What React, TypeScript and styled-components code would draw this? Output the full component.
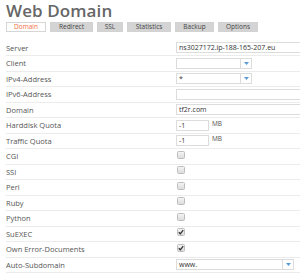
import React from "react";
import styled, { createGlobalStyle } from "styled-components";

const GlobalStyle = createGlobalStyle`
  html, body {
    margin: 0;
    padding: 0;
    background: #ffffff;
    overflow: hidden;
  }
  body {
    font-family: "Open Sans", "DejaVu Sans", sans-serif;
    color: #555555;
  }
`;

type Field =
  | { label: string; kind: "text"; value?: string }
  | { label: string; kind: "select"; value?: string; wide?: boolean }
  | { label: string; kind: "quota"; value: string }
  | { label: string; kind: "check"; checked?: boolean };

const tabs = [
  { name: "Domain", width: 40, active: true },
  { name: "Redirect", width: 43 },
  { name: "SSL", width: 26 },
  { name: "Statistics", width: 44 },
  { name: "Backup", width: 39 },
  { name: "Options", width: 40 },
];

const fields: Field[] = [
  { label: "Server", kind: "text", value: "ns3027172.ip-188-165-207.eu" },
  { label: "Client", kind: "select", value: "" },
  { label: "IPv4-Address", kind: "select", value: "*" },
  { label: "IPv6-Address", kind: "text", value: "" },
  { label: "Domain", kind: "text", value: "tf2r.com" },
  { label: "Harddisk Quota", kind: "quota", value: "-1" },
  { label: "Traffic Quota", kind: "quota", value: "-1" },
  { label: "CGI", kind: "check" },
  { label: "SSI", kind: "check" },
  { label: "Perl", kind: "check" },
  { label: "Ruby", kind: "check" },
  { label: "Python", kind: "check" },
  { label: "SuEXEC", kind: "check", checked: true },
  { label: "Own Error-Documents", kind: "check", checked: true },
  { label: "Auto-Subdomain", kind: "select", value: "www.", wide: true },
];

function Control({ field }: { field: Field }) {
  switch (field.kind) {
    case "text":
      return <StyledTextInput defaultValue={field.value} spellCheck={false} />;
    case "select":
      return (
        <StyledSelect $wide={field.wide}>
          <StyledSelectValue>{field.value}</StyledSelectValue>
          <StyledSelectArrow>
            <svg width="5" height="3" viewBox="0 0 5 3">
              <path d="M0 0 L5 0 L2.5 3 Z" fill="#5b9bd5" />
            </svg>
          </StyledSelectArrow>
        </StyledSelect>
      );
    case "quota":
      return (
        <StyledQuota>
          <StyledQuotaInput defaultValue={field.value} />
          <StyledUnit>MB</StyledUnit>
        </StyledQuota>
      );
    case "check":
      return (
        <StyledCheckbox>
          {field.checked && (
            <svg width="6" height="6" viewBox="0 0 6 6">
              <path
                d="M0.8 3.2 L2.4 4.8 L5.2 1.2"
                stroke="#333"
                strokeWidth="1.3"
                fill="none"
              />
            </svg>
          )}
        </StyledCheckbox>
      );
  }
}

export default function App() {
  return (
    <>
      <GlobalStyle />
      <StyledPage>
        <StyledTitle>Web Domain</StyledTitle>
        <StyledTabBar>
          {tabs.map((t) => (
            <StyledTab key={t.name} $active={t.active} $width={t.width}>
              {t.name}
            </StyledTab>
          ))}
        </StyledTabBar>
        <StyledForm>
          {fields.map((f, i) => (
            <StyledRow key={f.label} $first={i === 0}>
              <StyledLabel>{f.label}</StyledLabel>
              <StyledControlCell>
                <Control field={f} />
              </StyledControlCell>
            </StyledRow>
          ))}
        </StyledForm>
      </StyledPage>
    </>
  );
}

const StyledPage = styled.div`
  padding: 0 0 0 6px;
  width: 294px;
`;

const StyledTitle = styled.h1`
  margin: 0;
  font-size: 17px;
  line-height: 21px;
  font-weight: 600;
  color: #666666;
  letter-spacing: 0.1px;
`;

const StyledTabBar = styled.div`
  display: flex;
  gap: 4px;
  margin-top: 1px;
`;

const StyledTab = styled.div<{ $active?: boolean; $width: number }>`
  box-sizing: border-box;
  width: ${(p) => p.$width}px;
  height: 10px;
  font-size: 6.5px;
  line-height: 8px;
  text-align: center;
  border: 1px solid ${(p) => (p.$active ? "#d6d6d6" : "#d2d2d2")};
  background: ${(p) => (p.$active ? "#ffffff" : "#d4d4d4")};
  color: ${(p) => (p.$active ? "#f26b3a" : "#444444")};
`;

const StyledForm = styled.div`
  margin-top: 8px;
`;

const StyledRow = styled.div<{ $first?: boolean }>`
  box-sizing: border-box;
  display: grid;
  grid-template-columns: 170px 1fr;
  align-items: center;
  height: ${(p) => (p.$first ? 16 : 15.5)}px;
  border-bottom: 1px solid #ececec;
`;

const StyledLabel = styled.div`
  font-size: 7.5px;
  color: #555555;
  white-space: nowrap;
`;

const StyledControlCell = styled.div`
  display: flex;
  align-items: center;
  overflow: visible;
`;

const StyledTextInput = styled.input`
  box-sizing: border-box;
  width: 132px;
  height: 11px;
  margin: 0;
  padding: 0 2px;
  border: 1px solid #dcdcdc;
  font-family: "Open Sans", "DejaVu Sans", sans-serif;
  font-size: 7px;
  color: #333333;
  outline: none;
`;

const StyledSelect = styled.div<{ $wide?: boolean }>`
  box-sizing: border-box;
  display: flex;
  width: ${(p) => (p.$wide ? 118 : 76)}px;
  height: 11px;
  border: 1px solid #dcdcdc;
  background: #ffffff;
`;

const StyledSelectValue = styled.div`
  flex: 1;
  padding: 0 2px;
  font-size: 7px;
  line-height: 9px;
  color: #333333;
`;

const StyledSelectArrow = styled.div`
  width: 10px;
  border-left: 1px solid #dcdcdc;
  display: flex;
  align-items: center;
  justify-content: center;
`;

const StyledQuota = styled.div`
  display: flex;
  align-items: flex-start;
  gap: 3px;
`;

const StyledQuotaInput = styled(StyledTextInput)`
  width: 33px;
`;

const StyledUnit = styled.span`
  font-size: 6.5px;
  line-height: 7px;
  color: #555555;
`;

const StyledCheckbox = styled.div`
  box-sizing: border-box;
  width: 8px;
  height: 8px;
  margin: 0 0 3px 1px;
  border: 1px solid #bdbdbd;
  border-radius: 1.5px;
  background: linear-gradient(#f4f4f4, #dcdcdc);
  display: flex;
  align-items: center;
  justify-content: center;
`;
